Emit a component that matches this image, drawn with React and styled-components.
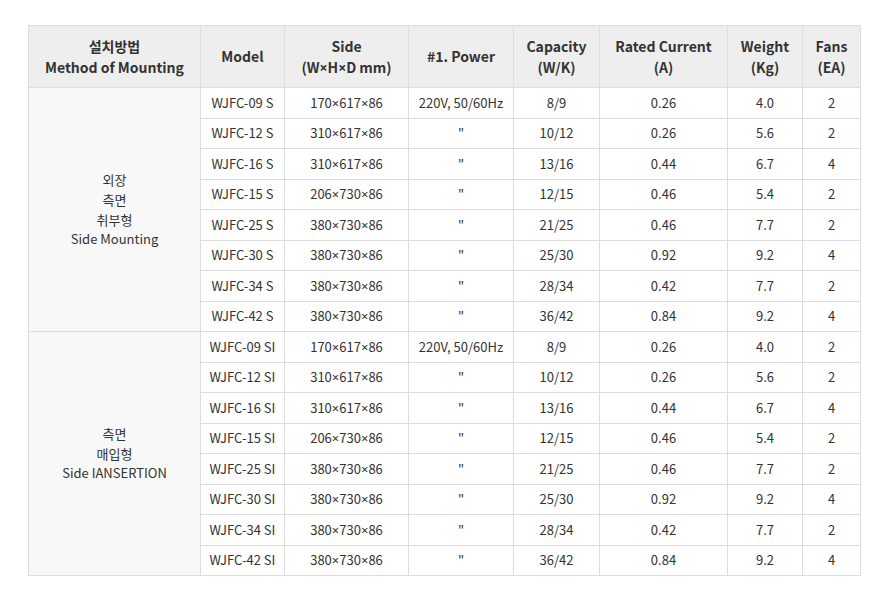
import React from "react";
import styled, { createGlobalStyle } from "styled-components";

const Global = createGlobalStyle`
  html, body { margin: 0; padding: 0; background: #ffffff; }
  body { font-family: "Noto Sans CJK KR", "Noto Sans", sans-serif; color: #333333; }
`;

const Page = styled.div`
  padding: 25px 20px 20px 28px;
`;

const Table = styled.table`
  width: 832px;
  border-collapse: collapse;
  table-layout: fixed;
  font-size: 14px;
  color: #333333;
  border: 1px solid #dddddd;
`;

const Th = styled.th`
  background: #eeeeee;
  border: 1px solid #dddddd;
  font-weight: 700;
  font-size: 14px;
  line-height: 20.5px;
  padding: 10px 4px;
  text-align: center;
  vertical-align: middle;
  color: #333333;
`;

const Td = styled.td`
  border: 1px solid #dddddd;
  font-size: 13px;
  line-height: ${(p) => (p.$group ? "19.7px" : "20.5px")};
  padding: 4.5px 4px;
  text-align: center;
  vertical-align: middle;
  background: ${(p) => (p.$group ? "#f8f8f8" : "#ffffff")};
  white-space: nowrap;
`;

const Mul = styled.span`
  font-family: "Noto Sans", "Liberation Sans", sans-serif;
  font-size: 1em;
  line-height: 0;
`;

const cols = [172, 84, 124, 105, 86, 128, 75, 58];

const base = [
  ["09", "170×617×86", "220V, 50/60Hz", "8/9", "0.26", "4.0", "2"],
  ["12", "310×617×86", '"', "10/12", "0.26", "5.6", "2"],
  ["16", "310×617×86", '"', "13/16", "0.44", "6.7", "4"],
  ["15", "206×730×86", '"', "12/15", "0.46", "5.4", "2"],
  ["25", "380×730×86", '"', "21/25", "0.46", "7.7", "2"],
  ["30", "380×730×86", '"', "25/30", "0.92", "9.2", "4"],
  ["34", "380×730×86", '"', "28/34", "0.42", "7.7", "2"],
  ["42", "380×730×86", '"', "36/42", "0.84", "9.2", "4"],
];

const groups = [
  { label: ["외장", "측면", "취부형", "Side Mounting"], suffix: "S" },
  { label: ["측면", "매입형", "Side IANSERTION"], suffix: "SI" },
];

function Dims({ text }) {
  const parts = text.split("×");
  return parts.map((p, i) => (
    <React.Fragment key={i}>
      {i > 0 && <Mul>×</Mul>}
      {p}
    </React.Fragment>
  ));
}

export default function App() {
  return (
    <Page>
      <Global />
      <Table>
        <colgroup>
          {cols.map((w, i) => (
            <col key={i} style={{ width: w }} />
          ))}
        </colgroup>
        <thead>
          <tr>
            <Th>설치방법<br />Method of Mounting</Th>
            <Th>Model</Th>
            <Th>Side<br />(<Dims text="W×H×D" /> mm)</Th>
            <Th>#1. Power</Th>
            <Th>Capacity<br />(W/K)</Th>
            <Th>Rated Current<br />(A)</Th>
            <Th>Weight<br />(Kg)</Th>
            <Th>Fans<br />(EA)</Th>
          </tr>
        </thead>
        <tbody>
          {groups.map((g) =>
            base.map((r, i) => (
              <tr key={g.suffix + i}>
                {i === 0 && (
                  <Td $group rowSpan={base.length}>
                    {g.label.map((l, k) => (
                      <React.Fragment key={k}>
                        {k > 0 && <br />}
                        {l}
                      </React.Fragment>
                    ))}
                  </Td>
                )}
                <Td>{`WJFC-${r[0]} ${g.suffix}`}</Td>
                <Td><Dims text={r[1]} /></Td>
                {r.slice(2).map((c, k) => (
                  <Td key={k}>{c}</Td>
                ))}
              </tr>
            ))
          )}
        </tbody>
      </Table>
    </Page>
  );
}
